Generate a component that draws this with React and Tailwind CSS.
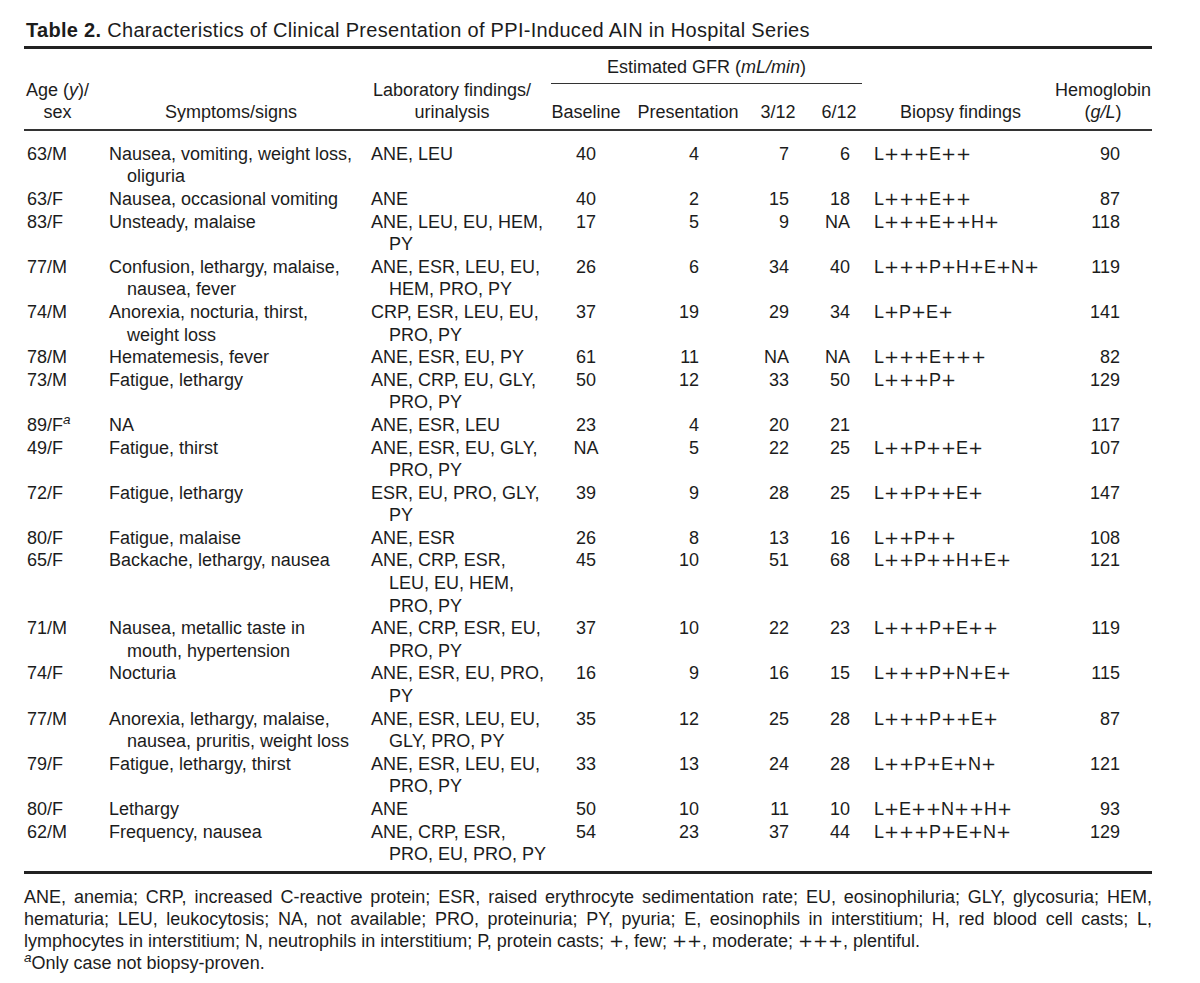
import React from 'react'

// each cell with more than one line is given as an array: first line flush, the rest hang-indented
const rows = [
  { age: '63/M', sym: ['Nausea, vomiting, weight loss,', 'oliguria'], lab: ['ANE, LEU'], base: '40', pres: '4', m3: '7', m6: '6', bx: 'L+++E++', hb: '90' },
  { age: '63/F', sym: ['Nausea, occasional vomiting'], lab: ['ANE'], base: '40', pres: '2', m3: '15', m6: '18', bx: 'L+++E++', hb: '87' },
  { age: '83/F', sym: ['Unsteady, malaise'], lab: ['ANE, LEU, EU, HEM,', 'PY'], base: '17', pres: '5', m3: '9', m6: 'NA', bx: 'L+++E++H+', hb: '118' },
  { age: '77/M', sym: ['Confusion, lethargy, malaise,', 'nausea, fever'], lab: ['ANE, ESR, LEU, EU,', 'HEM, PRO, PY'], base: '26', pres: '6', m3: '34', m6: '40', bx: 'L+++P+H+E+N+', hb: '119' },
  { age: '74/M', sym: ['Anorexia, nocturia, thirst,', 'weight loss'], lab: ['CRP, ESR, LEU, EU,', 'PRO, PY'], base: '37', pres: '19', m3: '29', m6: '34', bx: 'L+P+E+', hb: '141' },
  { age: '78/M', sym: ['Hematemesis, fever'], lab: ['ANE, ESR, EU, PY'], base: '61', pres: '11', m3: 'NA', m6: 'NA', bx: 'L+++E+++', hb: '82' },
  { age: '73/M', sym: ['Fatigue, lethargy'], lab: ['ANE, CRP, EU, GLY,', 'PRO, PY'], base: '50', pres: '12', m3: '33', m6: '50', bx: 'L+++P+', hb: '129' },
  { age: '89/F', note: true, sym: ['NA'], lab: ['ANE, ESR, LEU'], base: '23', pres: '4', m3: '20', m6: '21', bx: '', hb: '117' },
  { age: '49/F', sym: ['Fatigue, thirst'], lab: ['ANE, ESR, EU, GLY,', 'PRO, PY'], base: 'NA', pres: '5', m3: '22', m6: '25', bx: 'L++P++E+', hb: '107' },
  { age: '72/F', sym: ['Fatigue, lethargy'], lab: ['ESR, EU, PRO, GLY,', 'PY'], base: '39', pres: '9', m3: '28', m6: '25', bx: 'L++P++E+', hb: '147' },
  { age: '80/F', sym: ['Fatigue, malaise'], lab: ['ANE, ESR'], base: '26', pres: '8', m3: '13', m6: '16', bx: 'L++P++', hb: '108' },
  { age: '65/F', sym: ['Backache, lethargy, nausea'], lab: ['ANE, CRP, ESR,', 'LEU, EU, HEM,', 'PRO, PY'], base: '45', pres: '10', m3: '51', m6: '68', bx: 'L++P++H+E+', hb: '121' },
  { age: '71/M', sym: ['Nausea, metallic taste in', 'mouth, hypertension'], lab: ['ANE, CRP, ESR, EU,', 'PRO, PY'], base: '37', pres: '10', m3: '22', m6: '23', bx: 'L+++P+E++', hb: '119' },
  { age: '74/F', sym: ['Nocturia'], lab: ['ANE, ESR, EU, PRO,', 'PY'], base: '16', pres: '9', m3: '16', m6: '15', bx: 'L+++P+N+E+', hb: '115' },
  { age: '77/M', sym: ['Anorexia, lethargy, malaise,', 'nausea, pruritis, weight loss'], lab: ['ANE, ESR, LEU, EU,', 'GLY, PRO, PY'], base: '35', pres: '12', m3: '25', m6: '28', bx: 'L+++P++E+', hb: '87' },
  { age: '79/F', sym: ['Fatigue, lethargy, thirst'], lab: ['ANE, ESR, LEU, EU,', 'PRO, PY'], base: '33', pres: '13', m3: '24', m6: '28', bx: 'L++P+E+N+', hb: '121' },
  { age: '80/F', sym: ['Lethargy'], lab: ['ANE'], base: '50', pres: '10', m3: '11', m6: '10', bx: 'L+E++N++H+', hb: '93' },
  { age: '62/M', sym: ['Frequency, nausea'], lab: ['ANE, CRP, ESR,', 'PRO, EU, PRO, PY'], base: '54', pres: '23', m3: '37', m6: '44', bx: 'L+++P+E+N+', hb: '129' },
]

// the printed plus signs are set wide, so give each its own box
function Plus({ text }) {
  return text.split('').map((ch, i) =>
    ch === '+' ? (
      <span
        key={i}
        className="inline-block w-[15px] text-center"
        style={{ fontFamily: '"DejaVu Sans", sans-serif' }}
      >
        +
      </span>
    ) : (
      <span key={i}>{ch}</span>
    )
  )
}

function Lines({ lines }) {
  return lines.map((l, i) => (
    <div key={i} className={i === 0 ? 'whitespace-nowrap' : 'whitespace-nowrap pl-[18px]'}>
      {l}
    </div>
  ))
}

export default function App() {
  return (
    <div
      className="min-h-screen bg-white pl-[24px] pr-[48px] pt-[19px] text-[18px] leading-[22.6px] text-[#1c1c1c]"
      style={{ fontFamily: '"Liberation Sans", Arial, sans-serif' }}
    >
      <p className="pl-[2px] whitespace-nowrap text-[20px] tracking-[0.3px]">
        <span className="font-bold">Table 2.</span> Characteristics of Clinical Presentation of PPI-Induced AIN in Hospital Series
      </p>
      <div className="mt-[4px] h-[3px] bg-[#222]" />

      <table className="w-full table-fixed border-collapse">
        <colgroup>
          <col className="w-[85px]" />
          <col className="w-[262px]" />
          <col className="w-[177px]" />
          <col className="w-[76px]" />
          <col className="w-[120px]" />
          <col className="w-[62px]" />
          <col className="w-[58px]" />
          <col className="w-[176px]" />
          <col className="w-[112px]" />
        </colgroup>
        <thead className="border-b-2 border-[#333]">
          <tr>
            <th rowSpan={2} className="p-0 pr-[18px] pb-[5px] align-bottom font-normal text-center">
              <div>Age (<i>y</i>)/</div>
              <div>sex</div>
            </th>
            <th rowSpan={2} className="p-0 pr-[18px] pb-[5px] align-bottom font-normal text-center">Symptoms/signs</th>
            <th rowSpan={2} className="p-0 pr-[15px] pb-[5px] align-bottom font-normal text-center">
              <div>Laboratory findings/</div>
              <div>urinalysis</div>
            </th>
            <th colSpan={4} className="p-0 pt-[7px] pb-[5px] font-normal text-center">
              <div className="ml-[3px] mr-[2px] border-b border-[#333] pb-[5px]">
                Estimated GFR (<i>mL/min</i>)
              </div>
            </th>
            <th rowSpan={2} className="p-0 pl-[36px] pb-[5px] align-bottom font-normal text-left">Biopsy findings</th>
            <th rowSpan={2} className="p-0 pl-[14px] pb-[5px] align-bottom font-normal text-center">
              <div>Hemoglobin</div>
              <div>(<i>g/L</i>)</div>
            </th>
          </tr>
          <tr>
            <th className="p-0 pt-[12px] pb-[5px] font-normal text-center">Baseline</th>
            <th className="p-0 pl-[8px] pt-[12px] pb-[5px] font-normal text-center">Presentation</th>
            <th className="p-0 pl-[6px] pt-[12px] pb-[5px] font-normal text-center">3/12</th>
            <th className="p-0 pl-[8px] pt-[12px] pb-[5px] font-normal text-center">6/12</th>
          </tr>
        </thead>
        <tbody className="border-b-[3px] border-[#222]">
          {rows.map((r, idx) => {
            const pad = idx === 0 ? 'pt-[12px]' : idx === rows.length - 1 ? 'pb-[5px]' : ''
            return (
              <tr key={idx} className="align-top">
                <td className={`p-0 pl-[3px] ${pad}`}>
                  {r.age}
                  {r.note && <sup className="italic">a</sup>}
                </td>
                <td className={`p-0 ${pad}`}>
                  <Lines lines={r.sym} />
                </td>
                <td className={`p-0 ${pad}`}>
                  <Lines lines={r.lab} />
                </td>
                <td className={`p-0 text-center ${pad}`}>{r.base}</td>
                <td className={`p-0 pr-[45px] text-right ${pad}`}>{r.pres}</td>
                <td className={`p-0 pr-[17px] text-right ${pad}`}>{r.m3}</td>
                <td className={`p-0 pr-[14px] text-right ${pad}`}>{r.m6}</td>
                <td className={`p-0 pl-[10px] whitespace-nowrap ${pad}`}>
                  <Plus text={r.bx} />
                </td>
                <td className={`p-0 pr-[32px] text-right ${pad}`}>{r.hb}</td>
              </tr>
            )
          })}
        </tbody>
      </table>

      <div className="mt-[12px] leading-[22px]">
        <p className="text-justify [text-align-last:justify]">
          ANE, anemia; CRP, increased C-reactive protein; ESR, raised erythrocyte sedimentation rate; EU, eosinophiluria; GLY, glycosuria; HEM,
        </p>
        <p className="text-justify [text-align-last:justify]">
          hematuria; LEU, leukocytosis; NA, not available; PRO, proteinuria; PY, pyuria; E, eosinophils in interstitium; H, red blood cell casts; L,
        </p>
        <p>
          lymphocytes in interstitium; N, neutrophils in interstitium; P, protein casts; <Plus text="+" />, few; <Plus text="++" />, moderate; <Plus text="+++" />, plentiful.
        </p>
        <p>
          <sup className="italic">a</sup>Only case not biopsy-proven.
        </p>
      </div>
    </div>
  )
}
